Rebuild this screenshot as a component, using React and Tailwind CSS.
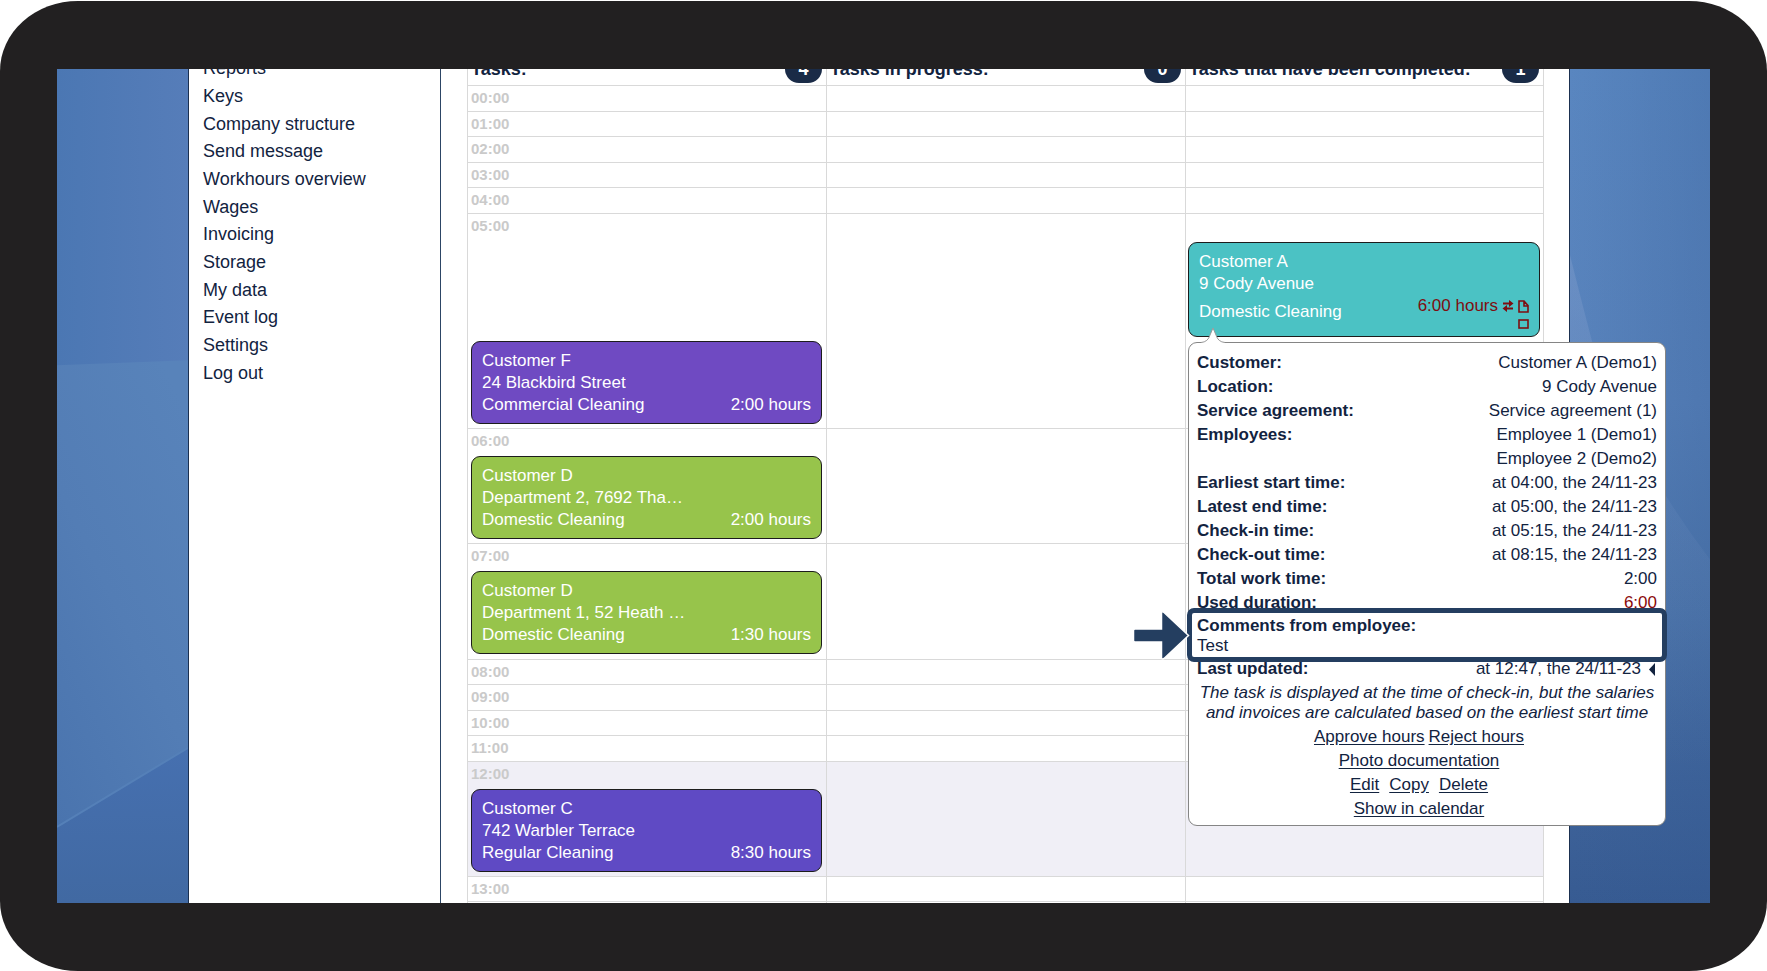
import React from 'react';

const menuItems = [
  'Reports',
  'Keys',
  'Company structure',
  'Send message',
  'Workhours overview',
  'Wages',
  'Invoicing',
  'Storage',
  'My data',
  'Event log',
  'Settings',
  'Log out',
];

const columns = [
  { title: 'Tasks:', count: 4 },
  { title: 'Tasks in progress:', count: 0 },
  { title: 'Tasks that have been completed:', count: 1 },
];

const hours = [
  { time: '00:00', height: 'h-[26px]' },
  { time: '01:00', height: 'h-[25px]' },
  { time: '02:00', height: 'h-[26px]' },
  { time: '03:00', height: 'h-[25px]' },
  { time: '04:00', height: 'h-[26px]' },
  {
    time: '05:00',
    height: 'h-[215px]',
    late: true,
    task: {
      customer: 'Customer F',
      address: '24 Blackbird Street',
      type: 'Commercial Cleaning',
      duration: '2:00 hours',
      color: 'bg-[#6f4ac2]',
    },
    completed: true,
  },
  {
    time: '06:00',
    height: 'h-[115px]',
    task: {
      customer: 'Customer D',
      address: 'Department 2, 7692 Tha…',
      type: 'Domestic Cleaning',
      duration: '2:00 hours',
      color: 'bg-[#97c44b]',
    },
  },
  {
    time: '07:00',
    height: 'h-[116px]',
    task: {
      customer: 'Customer D',
      address: 'Department 1, 52 Heath …',
      type: 'Domestic Cleaning',
      duration: '1:30 hours',
      color: 'bg-[#97c44b]',
    },
  },
  { time: '08:00', height: 'h-[25px]' },
  { time: '09:00', height: 'h-[26px]' },
  { time: '10:00', height: 'h-[25px]' },
  { time: '11:00', height: 'h-[26px]' },
  {
    time: '12:00',
    height: 'h-[115px]',
    current: true,
    task: {
      customer: 'Customer C',
      address: '742 Warbler Terrace',
      type: 'Regular Cleaning',
      duration: '8:30 hours',
      color: 'bg-[#5f4ac4]',
    },
  },
  { time: '13:00', height: 'h-[25px]' },
  { time: '14:00', height: 'h-[26px]' },
];

const details = [
  { label: 'Customer:', values: ['Customer A (Demo1)'] },
  { label: 'Location:', values: ['9 Cody Avenue'] },
  { label: 'Service agreement:', values: ['Service agreement (1)'] },
  { label: 'Employees:', values: ['Employee 1 (Demo1)', 'Employee 2 (Demo2)'] },
  { label: 'Earliest start time:', values: ['at 04:00, the 24/11-23'] },
  { label: 'Latest end time:', values: ['at 05:00, the 24/11-23'] },
  { label: 'Check-in time:', values: ['at 05:15, the 24/11-23'] },
  { label: 'Check-out time:', values: ['at 08:15, the 24/11-23'] },
  { label: 'Total work time:', values: ['2:00'] },
  { label: 'Used duration:', values: ['6:00'], alert: true },
];

// Blue faceted desktop background
const Wallpaper = () => (
  <svg
    className="absolute inset-0 h-full w-full"
    viewBox="0 0 1653 833"
    preserveAspectRatio="none"
    aria-hidden="true"
  >
    <defs>
      <linearGradient id="leftTop" x1="0" y1="0" x2="1" y2="0">
        <stop offset="0" stopColor="#4b77b3" />
        <stop offset="1" stopColor="#567db9" />
      </linearGradient>
      <linearGradient id="leftMid" x1="0.8" y1="0" x2="0.3" y2="1">
        <stop offset="0" stopColor="#5883ba" />
        <stop offset="0.5" stopColor="#537db5" />
        <stop offset="1" stopColor="#4a74ae" />
      </linearGradient>
      <linearGradient id="leftLow" x1="0" y1="0" x2="0" y2="1">
        <stop offset="0" stopColor="#4670b0" />
        <stop offset="1" stopColor="#4169a2" />
      </linearGradient>
      <linearGradient id="right" x1="0" y1="0" x2="0" y2="1">
        <stop offset="0" stopColor="#5986c0" />
        <stop offset="0.4" stopColor="#5882bb" />
        <stop offset="0.65" stopColor="#4c75ab" />
        <stop offset="0.85" stopColor="#3f649b" />
        <stop offset="1" stopColor="#375b92" />
      </linearGradient>
      <linearGradient id="rightShade" x1="0" y1="0" x2="1" y2="0">
        <stop offset="0" stopColor="#30568f" stopOpacity="0" />
        <stop offset="1" stopColor="#30568f" stopOpacity="0.25" />
      </linearGradient>
      <linearGradient id="facet" x1="0" y1="0" x2="0" y2="1">
        <stop offset="0" stopColor="#8aa3cf" stopOpacity="0.35" />
        <stop offset="0.5" stopColor="#8aa3cf" stopOpacity="0.1" />
        <stop offset="1" stopColor="#8aa3cf" stopOpacity="0" />
      </linearGradient>
    </defs>
    <rect width="131" height="833" fill="url(#leftTop)" />
    <path d="M0 296 L131 291 V833 H0 Z" fill="url(#leftMid)" />
    <path d="M0 757 L131 678 V833 H0 Z" fill="url(#leftLow)" />
    <path d="M0 757 L131 678" stroke="#5580b8" strokeWidth="2" />
    <rect x="131" width="1522" height="833" fill="url(#right)" />
    <rect x="1513" width="140" height="833" fill="url(#rightShade)" />
    <path d="M1513 186 Q1524 230 1535 272 Q1570 380 1653 490 V700 H1513 Z" fill="url(#facet)" />
  </svg>
);

const SwapIcon = () => (
  <svg width="12" height="12" viewBox="0 0 12 12" fill="none" stroke="currentColor" strokeWidth="1.8" aria-hidden="true">
    <path d="M1 3.5 H8 M4 8.5 H11" />
    <path d="M7 0 L11.5 3.5 L7 7 Z M5 5 L0.5 8.5 L5 12 Z" fill="currentColor" stroke="none" />
  </svg>
);

const PageIcon = () => (
  <svg width="11" height="13" viewBox="0 0 11 13" fill="none" stroke="currentColor" strokeWidth="1.6" aria-hidden="true">
    <path d="M1 1 H6 L10 5.5 V12 H1 Z M6 1 V6 H10" />
  </svg>
);

const BoxIcon = () => (
  <svg width="11" height="10" viewBox="0 0 11 10" fill="none" stroke="currentColor" strokeWidth="1.6" aria-hidden="true">
    <rect x="1" y="1" width="9" height="8" />
  </svg>
);

const TaskCard = ({ task, late }) => (
  <article
    className={`rounded-[9px] border border-[#1c1c1c] px-[10px] pt-2 pb-[7px] text-[17px] leading-[22px] text-white ${task.color} ${
      late ? 'mt-[103px]' : 'mt-[3px]'
    }`}
  >
    <p>{task.customer}</p>
    <p>{task.address}</p>
    <div className="flex justify-between">
      <span>{task.type}</span>
      <span>{task.duration}</span>
    </div>
  </article>
);

const Link = ({ children }) => (
  <a href="#" className="underline underline-offset-2">
    {children}
  </a>
);

const TaskDetails = () => (
  <section className="absolute top-[100px] left-0 z-10 w-[478px] rounded-[9px] border border-[#858585] bg-white px-2 pt-2 pb-1 text-[17px] leading-6">
    {/* pointer up to the card */}
    <svg className="absolute -top-4 left-3 h-[17px] w-6" viewBox="0 0 24 17" aria-hidden="true">
      <path d="M0 17 V15.5 Q7 15 9 8 L12 1 L15 8 Q17 15 24 15.5 V17 Z" fill="#fff" />
      <path d="M0 15.5 Q7 15 9 8 L12 1 L15 8 Q17 15 24 15.5" fill="none" stroke="#999" />
    </svg>
    <dl>
      {details.map((row) => (
        <div key={row.label} className="flex justify-between">
          <dt className="font-bold">{row.label}</dt>
          <dd className={row.alert ? 'text-right text-[#8b0a0a]' : 'text-right'}>
            {row.values.map((value) => (
              <p key={value}>{value}</p>
            ))}
          </dd>
        </div>
      ))}
      <div className="relative py-px leading-5">
        <dt className="font-bold">Comments from employee:</dt>
        <dd>Test</dd>
        {/* highlight frame with its arrow */}
        <div className="absolute -top-[7px] -right-[10px] -bottom-[5px] -left-[10px] rounded-[7px] border-[5px] border-[#243e60]" />
        <svg className="absolute -top-[5px] -left-[65px] h-[50px] w-[60px]" viewBox="0 0 60 50" aria-hidden="true">
          <path
            d="M3 19 H29.5 V3 Q30 1 32 2.5 L56.5 25.5 L32 48.5 Q30 49.5 29.5 48 V32 H3 Q1.5 32 1.5 30.5 V20.5 Q1.5 19 3 19 Z"
            fill="#243e60"
            stroke="#fff"
            strokeWidth="1.5"
          />
        </svg>
      </div>
      <div className="flex justify-between">
        <dt className="font-bold">Last updated:</dt>
        <dd className="flex items-center gap-2 pr-0.5">
          at 12:47, the 24/11-23
          <svg width="6" height="13" viewBox="0 0 6 13" fill="currentColor" aria-hidden="true">
            <path d="M6 0 V13 L0 6.5 Z" />
          </svg>
        </dd>
      </div>
    </dl>
    <p className="py-0.5 text-center leading-5 whitespace-nowrap italic">
      The task is displayed at the time of check-in, but the salaries
      <br />
      and invoices are calculated based on the earliest start time
    </p>
    <div className="flex flex-col items-center pr-4">
      <div className="flex gap-1">
        <Link>Approve hours</Link>
        <Link>Reject hours</Link>
      </div>
      <Link>Photo documentation</Link>
      <div className="flex gap-[10px]">
        <Link>Edit</Link>
        <Link>Copy</Link>
        <Link>Delete</Link>
      </div>
      <Link>Show in calendar</Link>
    </div>
  </section>
);

const CompletedTask = () => (
  <div className="relative mt-7">
    <article className="rounded-[9px] border border-[#1c1c1c] bg-[#4bc2c4] px-[10px] pt-2 pb-[7px] text-[17px] leading-[22px] text-white">
      <p>Customer A</p>
      <p>9 Cody Avenue</p>
      <div className="flex items-center justify-between">
        <span>Domestic Cleaning</span>
        <div className="flex flex-col items-end gap-0.5 text-[#7e0e10]">
          <span className="flex items-center gap-1">
            6:00 hours
            <SwapIcon />
            <PageIcon />
          </span>
          <BoxIcon />
        </div>
      </div>
    </article>
    <TaskDetails />
  </div>
);

const App = () => {
  return (
    <div className="h-screen bg-white pt-px font-['Liberation_Sans',Arial,sans-serif] text-[#12233f]">
      <div className="h-full rounded-[78px/70px] bg-[#222021] px-[57px] py-[68px]">
        <div className="relative h-full overflow-hidden">
          <Wallpaper />
          <div className="relative -mt-5 mr-[140px] ml-[131px] flex min-h-full border-x border-[#1b3050] bg-white">
            <aside className="w-[252px] shrink-0 border-r border-[#2c4565] pt-1.5 pl-[14px]">
              <nav className="flex h-[332px] flex-col text-[18px]">
                {menuItems.map((item) => (
                  <a key={item} href="#" className="flex flex-1 items-center">
                    {item}
                  </a>
                ))}
              </nav>
            </aside>

            <main className="flex-1 pr-[25px] pl-[26px]">
              <table className="w-full table-fixed border-separate border-spacing-0">
                <thead>
                  <tr className="h-9">
                    {columns.map((column) => (
                      <th key={column.title} className="border-l border-[#d9d9d9] p-0 text-left text-[18px] last:border-r">
                        <div className="flex items-center justify-between pt-1 pr-1 pl-[3px]">
                          {column.title}
                          <span className="flex h-7 w-[37px] items-center justify-center rounded-full bg-[#1a2b47] text-white">
                            {column.count}
                          </span>
                        </div>
                      </th>
                    ))}
                  </tr>
                </thead>
                <tbody>
                  {hours.map((hour) => (
                    <tr key={hour.time} className={`${hour.height} ${hour.current ? 'bg-[#f0eff6]' : ''}`}>
                      <td className="border-t border-l border-[#d9d9d9] p-0 pr-1 pl-[3px] align-top">
                        <p className="h-6 text-[15px] leading-6 font-bold text-[#cacaca]">{hour.time}</p>
                        {hour.task && <TaskCard task={hour.task} late={hour.late} />}
                      </td>
                      <td className="border-t border-l border-[#d9d9d9] p-0" />
                      <td className="border-x border-t border-[#d9d9d9] p-0 pr-[3px] pl-0.5 align-top">
                        {hour.completed && <CompletedTask />}
                      </td>
                    </tr>
                  ))}
                </tbody>
              </table>
            </main>
          </div>
        </div>
      </div>
    </div>
  );
};

export default App;
